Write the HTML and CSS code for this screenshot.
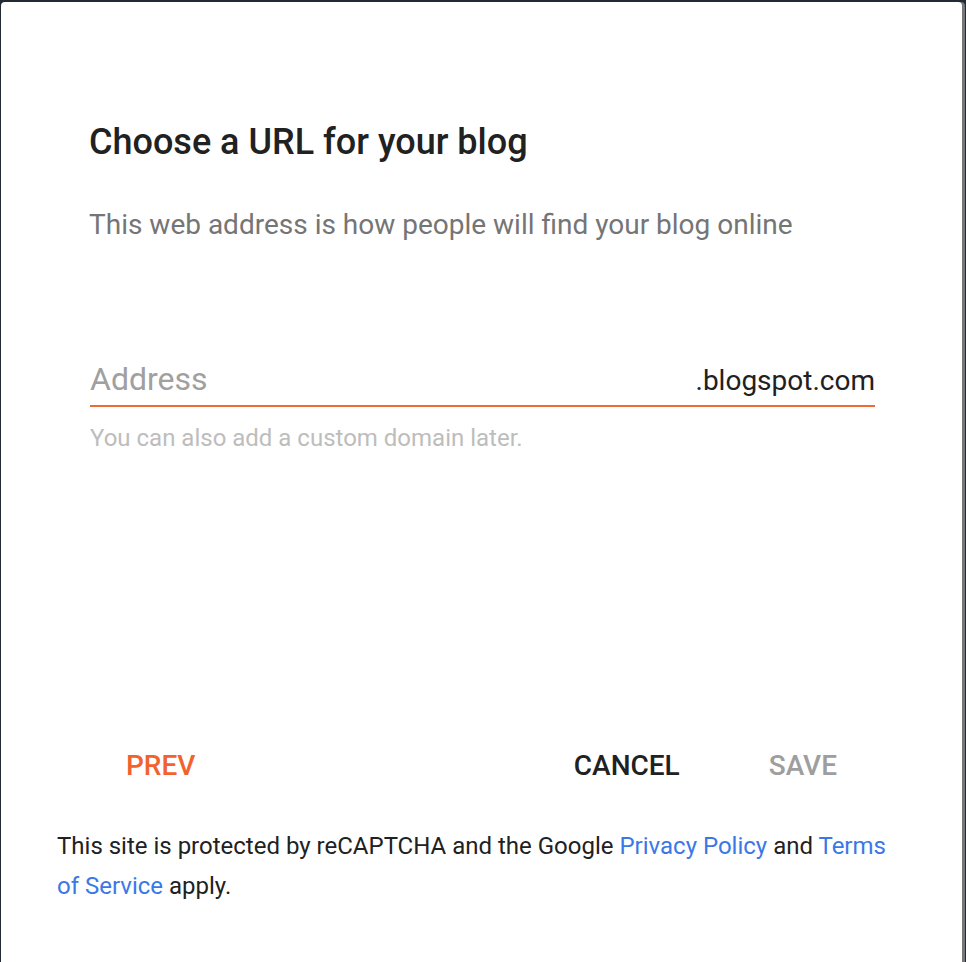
FILE: index.html
```html
<!DOCTYPE html>
<html>
<head>
<meta charset="utf-8">
<link rel="stylesheet" href="styles.css">
</head>
<body>
<div class="dialog">
  <div class="content">
    <h1 class="title">Choose a URL for your blog</h1>
    <p class="subtitle">This web address is how people will find your blog online</p>
    <div class="field">
      <div class="field-row">
        <span class="placeholder">Address</span>
        <span class="suffix">.blogspot.com</span>
      </div>
      <div class="underline"></div>
      <div class="helper">You can also add a custom domain later.</div>
    </div>
  </div>
  <div class="actions">
    <span class="btn prev">PREV</span>
    <span class="spacer"></span>
    <span class="btn cancel">CANCEL</span>
    <span class="btn save">SAVE</span>
  </div>
  <p class="legal">This site is protected by reCAPTCHA and the Google <a href="#">Privacy Policy</a> and <a href="#">Terms of Service</a> apply.</p>
</div>
</body>
</html>
```
FILE: styles.css
```css
html, body {
  margin: 0;
  padding: 0;
  height: 100%;
}
body {
  background: #222a33;
  font-family: Roboto, "Noto Sans", sans-serif;
  overflow: hidden;
}
.dialog {
  background: #fff;
  margin: 2px 4px 0 1px;
  height: 960px;
  border-radius: 4px 4px 0 0;
  box-sizing: border-box;
  display: flex;
  flex-direction: column;
  box-shadow: 3px 0 0 #777;
}
.content {
  padding: 0 87px 0 89px;
}
.title {
  margin: 118px 0 0;
  font-size: 36px;
  font-weight: 500;
  color: #212121;
  line-height: 44px;
  margin-left: -1px;
}
.subtitle {
  margin: 43px 0 0;
  font-size: 28px;
  font-weight: 400;
  color: #757575;
  line-height: 36px;
  margin-left: -1px;
}
.field {
  margin-top: 117px;
}
.field-row {
  display: flex;
  justify-content: space-between;
  align-items: baseline;
  height: 40px;
}
.placeholder {
  font-size: 32px;
  color: #a0a0a0;
}
.suffix {
  font-size: 28px;
  color: #212121;
}
.underline {
  height: 2px;
  background: #f06a35;
  margin-top: 5px;
}
.helper {
  margin-top: 17px;
  font-size: 24px;
  color: #bdbdbd;
}
.actions {
  margin-top: auto;
  display: flex;
  align-items: center;
  padding: 0 125px 0 125px;
  height: 40px;
}
.btn {
  font-size: 28px;
  font-weight: 500;
}
.spacer { flex: 1; }
.prev { color: #f2622e; }
.cancel { color: #212121; margin-right: 89px; }
.save { color: #9e9e9e; }
.legal {
  margin: 41px 0 56px;
  padding: 0 60px 0 56px;
  font-size: 24px;
  line-height: 40px;
  color: #212121;
}
.legal a {
  color: #3b78e7;
  text-decoration: none;
}
```
